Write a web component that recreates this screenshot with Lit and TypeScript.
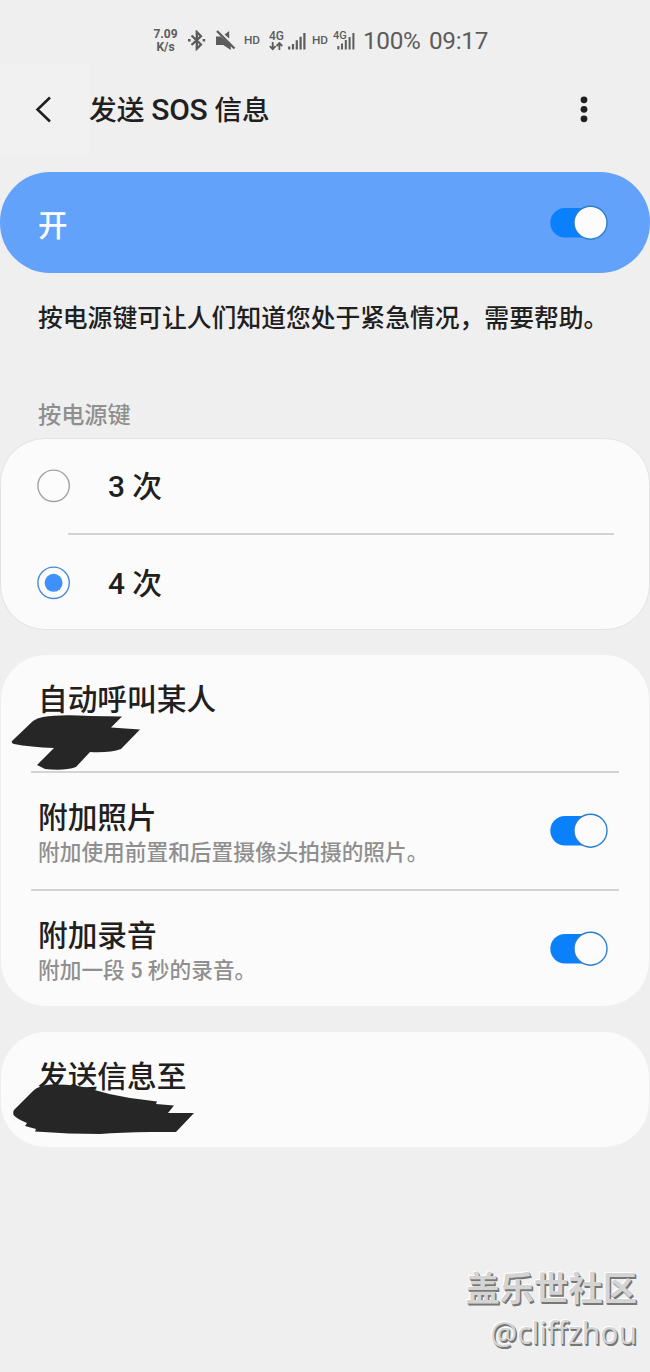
import { LitElement, html, css, svg } from "lit";
import { customElement, property, state } from "lit/decorators.js";

@customElement("toggle-switch")
export class ToggleSwitch extends LitElement {
  static styles = css`
    :host { display: block; flex: none; width: 58px; height: 36px; }
    svg { display: block; }
  `;
  render() {
    return html`<svg width="58" height="36" viewBox="0 0 58 36">
      <rect x="0.3" y="3" width="52" height="29.6" rx="14.8" fill="#0a80fb" />
      <circle cx="40.5" cy="17.7" r="16.5" fill="#fcfcfc" stroke="#2b7fcc" stroke-width="1.4" />
    </svg>`;
  }
}

@customElement("radio-dot")
export class RadioDot extends LitElement {
  @property({ type: Boolean }) checked = false;
  static styles = css`
    :host { display: block; flex: none; width: 34px; height: 34px; }
    svg { display: block; }
  `;
  render() {
    return html`<svg width="34" height="34" viewBox="0 0 34 34">
      <circle cx="16.6" cy="16.8" r="15.7" fill="#fcfcfc" stroke=${this.checked ? "#4a8ad6" : "#a2a2a2"} stroke-width="1.4" />
      ${this.checked ? svg`<circle cx="16.6" cy="16.8" r="9" fill="#3e90fa" />` : null}
    </svg>`;
  }
}

@customElement("status-bar")
export class StatusBar extends LitElement {
  static styles = css`
    :host {
      display: flex; height: 64px; padding-left: 152px; box-sizing: border-box;
      font-family: Roboto, sans-serif; color: #5c5c5c; align-items: flex-start;
    }
    .speed {
      display: flex; flex-direction: column; width: 27px; margin-top: 27px; text-align: center;
      font: 700 12px/14px Roboto, sans-serif;
    }
    .speed div:last-child { line-height: 12px; }
    svg { display: block; flex: none; }
    .bt { margin: 30px 0 0 8px; }
    .mute { margin: 30px 0 0 9px; }
    .hd { width: 16px; margin: 33px 0 0 8px; font: 500 11.8px/14px Roboto, sans-serif; }
    .net { width: 16px; margin: 30px 0 0 9px; font: 500 12px/12px Roboto, sans-serif; }
    .bars { margin: 32px 0 0 3px; }
    .hd2 { margin-left: 6px; }
    .net2 { width: 14px; margin: 30px 0 0 5px; font: 500 11px/11px Roboto, sans-serif; }
    .bars2 { margin: 32px 0 0 -10px; }
    .pct { width: 58px; margin: 26px 0 0 8px; font: 400 24.3px/29px Roboto, sans-serif; letter-spacing: -0.3px; }
    .time { margin: 26px 0 0 8px; font: 400 24.3px/29px Roboto, sans-serif; letter-spacing: -0.3px; }
  `;
  render() {
    return html`
      <div class="speed"><div>7.09</div><div>K/s</div></div>
      <svg class="bt" width="20" height="21" viewBox="0 0 20 21">
        <path d="M4.5 5.5 14 14.5 9.8 18.7V2L14 6.2 4.5 15" fill="none" stroke="#5c5c5c" stroke-width="2.3" />
        <path d="M1 10.3h2.6M15.6 10.3h2.6" stroke="#5c5c5c" stroke-width="2.4" />
      </svg>
      <svg class="mute" width="20" height="21" viewBox="0 0 20 21">
        <path d="M0 6.5H4.5L14.8 15V20L7.2 15H0ZM8.600 4.500 13.200 1V8.500Z" fill="#5c5c5c" />
        <path d="M1 1 18.500 18.500" stroke="#5c5c5c" stroke-width="2.3" />
      </svg>
      <div class="hd">HD</div>
      <div class="net">4G
        <svg width="14" height="9" viewBox="0 0 14 9">
          <path d="M3.7 0V7M.8 4.2 3.7 7.2 6.6 4.2M10.4 8V1M7.5 4 10.4 1 13.3 4" fill="none" stroke="#5c5c5c" stroke-width="1.8" />
        </svg>
      </div>
      <svg class="bars" width="18" height="18" viewBox="0 0 18 18">
        <path d="M1.2 17.5V14.5M5 17.5V12M8.8 17.5V8.3M12.6 17.5V4.8M16.4 17.5V1" stroke="#5c5c5c" stroke-width="2.2" />
      </svg>
      <div class="hd hd2">HD</div>
      <div class="net2">4G</div>
      <svg class="bars2" width="18" height="18" viewBox="0 0 18 18">
        <path d="M1.4 17.5V14M5 17.5V11.5M8.8 17.5V8M12.6 17.5V5M16.4 17.5V1" stroke="#5c5c5c" stroke-width="2" />
      </svg>
      <div class="pct">100%</div>
      <div class="time">09:17</div>
    `;
  }
}

@customElement("app-root")
export class AppRoot extends LitElement {
  @state() private presses = 4;

  static styles = css`
    :host {
      display: flex; flex-direction: column; width: 650px; height: 1372px; box-sizing: border-box;
      background: #efefef; color: #202020; overflow: hidden;
      font-family: Roboto, "Noto Sans CJK SC", sans-serif; font-weight: 500; white-space: nowrap;
    }
    .header { display: flex; height: 108px; box-sizing: border-box; }
    .back { width: 89px; height: 91px; background: #f1f1f1; }
    .back svg, .more { display: block; }
    .title { flex: 1; font-size: 27.7px; line-height: 40px; padding-top: 26px; }
    .latin { font-size: 30px; letter-spacing: -0.3px; }
    .more { margin: 31px 58.5px 0 0; }
    .master {
      display: flex; align-items: center; justify-content: space-between; height: 101px;
      border-radius: 50px; background: #62a2fb; color: #fff; padding: 0 42px 0 38px; box-sizing: border-box;
      font-size: 29.5px;
    }
    .desc { margin: 28px 0 0 38px; font-size: 24.8px; line-height: 36px; }
    .label { margin: 62px 0 0 38px; font-size: 23.2px; line-height: 32px; color: #8f8f8f; height: 39px; box-sizing: border-box; }
    .card {
      background: #fbfbfb; border-radius: 45px; margin: 0 1px 26px; box-sizing: border-box; flex: none;
    }
    .presses { height: 192px; margin: 0 0 25px; border: 1px solid #e3e3e3; }
    .option { display: flex; align-items: center; height: 94px; padding-left: 36px; gap: 37px; font-size: 29.8px; line-height: 40px; }
    .option:last-child { height: 95px; }
    .option span { padding-top: 2px; }
    .rule { height: 2px; background: #d4d4d4; margin: 0 30px; }
    .rule.inset { margin: 0 35px 0 67px; }
    .extras { height: 351px; }
    .row { display: flex; align-items: center; justify-content: space-between; padding: 0 41px 0 37px; height: 116px; box-sizing: border-box; }
    .text { padding-top: 3px; }
    .name { font-size: 29.7px; line-height: 40px; }
    .sub { font-size: 21.7px; line-height: 30px; color: #8f8f8f; }
    .person { position: relative; display: block; padding-top: 25px; }
    .send { height: 115px; margin-bottom: 0; }
    .scribble { position: absolute; left: 9px; top: 56px; }
    .sign {
      margin: auto 13px 20px auto; text-align: right; color: #d4d4d4;
      text-shadow: 1px 1px 0 #777, 1.5px 1.5px 0 #777, -1px -1px 0 #fff;
    }
    .club { font-size: 34.3px; line-height: 42px; font-weight: 700; }
    .user { font: 400 30px/38px "Noto Sans", sans-serif; margin-top: 4px; }
  `;

  private option(count: number) {
    return html`<div class="option" @click=${() => (this.presses = count)}>
      <radio-dot ?checked=${this.presses === count}></radio-dot><span>${count} 次</span>
    </div>`;
  }

  private attachment(name: string, sub: string) {
    return html`<div class="row">
      <div class="text"><div class="name">${name}</div><div class="sub">${sub}</div></div>
      <toggle-switch></toggle-switch>
    </div>`;
  }

  render() {
    return html`
      <status-bar></status-bar>
      <div class="header">
        <div class="back">
          <svg width="89" height="91" viewBox="0 0 89 91">
            <path d="M50 33.5 37.5 45.5 50 57.5" fill="none" stroke="#202020" stroke-width="2.6" />
          </svg>
        </div>
        <div class="title">发送 <span class="latin">SOS</span> 信息</div>
        <svg class="more" width="16" height="30" viewBox="0 0 16 30" fill="#202020">
          <circle cx="8" cy="4.8" r="3.4" /><circle cx="8" cy="14.3" r="3.4" /><circle cx="8" cy="23.8" r="3.4" />
        </svg>
      </div>
      <div class="master"><span>开</span><toggle-switch></toggle-switch></div>
      <div class="desc">按电源键可让人们知道您处于紧急情况，需要帮助。</div>
      <div class="label">按电源键</div>
      <div class="card presses">
        ${this.option(3)}
        <div class="rule inset"></div>
        ${this.option(4)}
      </div>
      <div class="card extras">
        <div class="row person">
          <div class="name">自动呼叫某人</div>
          <svg class="scribble" width="140" height="64" viewBox="10 711 140 64">
            <path d="M12 741 33 721Q37 718 43 717Q60 714 90 716L122 716.500 111 727.500 140 729.500 121 749Q110 753 90 752L76 767Q65 771 45 769L37 765 54 748Q30 747 14 744Q11 743 12 741Z" fill="#262626" />
          </svg>
        </div>
        <div class="rule"></div>
        ${this.attachment("附加照片", "附加使用前置和后置摄像头拍摄的照片。")}
        <div class="rule"></div>
        ${this.attachment("附加录音", "附加一段 5 秒的录音。")}
      </div>
      <div class="card send">
        <div class="row person">
          <div class="name">发送信息至</div>
          <svg class="scribble" width="190" height="60" viewBox="10 1088 190 60" overflow="visible">
            <path d="M14 1110 33 1091Q39 1085 52 1084.500Q75 1084 91 1089Q110 1095 130 1098L157 1101.500 156 1104 174 1105.500 168 1113 194 1113 176 1132 150 1132Q120 1132.500 100 1134Q70 1134 35 1131.500L36 1129 25 1126 27 1123Q17 1119 13.500 1115Q12.500 1112 14 1110Z" fill="#262626" />
          </svg>
        </div>
      </div>
      <div class="sign"><div class="club">盖乐世社区</div><div class="user">@cliffzhou</div></div>
    `;
  }
}
